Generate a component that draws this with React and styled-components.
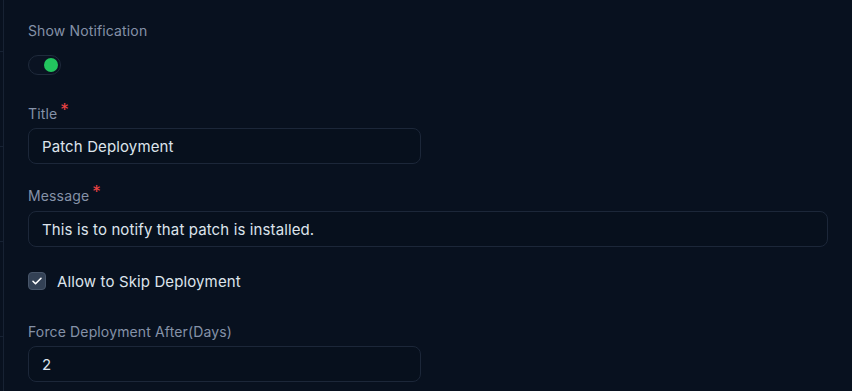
import React from "react";
import styled, { createGlobalStyle } from "styled-components";

const Global = createGlobalStyle`
  html, body { margin: 0; padding: 0; background: #08111f; }
  body { font-family: Inter, "Noto Sans", sans-serif; -webkit-font-smoothing: antialiased; }
  * { box-sizing: border-box; }
`;

const Page = styled.div`
  display: flex;
  width: 852px;
  height: 391px;
  background: #08111f;
  overflow: hidden;
`;

const Rail = styled.div`
  width: 4px;
  flex: none;
  border-right: 1px solid #172233;
  background-image: repeating-linear-gradient(
    to bottom,
    transparent 0px,
    transparent 51px,
    #172233 51px,
    #172233 52px,
    transparent 52px,
    transparent 95px
  );
`;

const Form = styled.div`
  flex: 1;
  display: flex;
  flex-direction: column;
  padding: 21px 24px 0 24px;
`;

const Field = styled.div`
  display: flex;
  flex-direction: column;
  gap: ${(p) => p.$gap || 4}px;
  margin-top: ${(p) => p.$top || 0}px;
`;

const Label = styled.div`
  font-size: 14px;
  line-height: 20px;
  letter-spacing: 0.14px;
  color: #8592a8;
  display: flex;
  align-items: flex-start;
`;

const Star = styled.span`
  color: #ef4444;
  font-size: 17px;
  line-height: 12px;
  margin-left: 3px;
  margin-top: 0px;
`;

const Toggle = styled.div`
  width: 33px;
  height: 20px;
  border-radius: 10px;
  border: 1px solid #1f2a3b;
  background: #0a1322;
  display: flex;
  align-items: center;
  justify-content: flex-end;
  padding-right: 2px;
`;

const Knob = styled.div`
  width: 14px;
  height: 14px;
  border-radius: 50%;
  background: #22c55e;
`;

const Input = styled.div`
  width: ${(p) => p.$width};
  height: 36px;
  border: 1px solid #1c2739;
  border-radius: 8px;
  background: #07101d;
  display: flex;
  align-items: center;
  padding-left: 13px;
  font-size: 15px;
  letter-spacing: 0.12px;
  color: #dde4ec;
`;

const CheckRow = styled.div`
  display: flex;
  align-items: center;
  gap: 11px;
  margin-top: 24px;
  height: 20px;
  font-size: 15px;
  letter-spacing: 0.12px;
  color: #dde4ec;
`;

const Box = styled.div`
  width: 18px;
  height: 18px;
  border-radius: 4px;
  background: #334155;
  border: 1px solid #475569;
  display: flex;
  align-items: center;
  justify-content: center;
`;

export default function App() {
  return (
    <>
      <Global />
      <Page>
        <Rail />
        <Form>
          <Field $gap={14}>
            <Label>Show Notification</Label>
            <Toggle>
              <Knob />
            </Toggle>
          </Field>
          <Field $top={29}>
            <Label>
              Title<Star>*</Star>
            </Label>
            <Input $width="393px">Patch Deployment</Input>
          </Field>
          <Field $top={22} $gap={5}>
            <Label>
              Message<Star>*</Star>
            </Label>
            <Input $width="800px">This is to notify that patch is installed.</Input>
          </Field>
          <CheckRow>
            <Box>
              <svg width="12" height="12" viewBox="0 0 24 24" fill="none" stroke="#ffffff" strokeWidth="3.2" strokeLinecap="round" strokeLinejoin="round">
                <path d="M4 12.5l5 5L20 6.5" />
              </svg>
            </Box>
            Allow to Skip Deployment
          </CheckRow>
          <Field $top={31} $gap={4}>
            <Label>Force Deployment After(Days)</Label>
            <Input $width="393px">2</Input>
          </Field>
        </Form>
      </Page>
    </>
  );
}
